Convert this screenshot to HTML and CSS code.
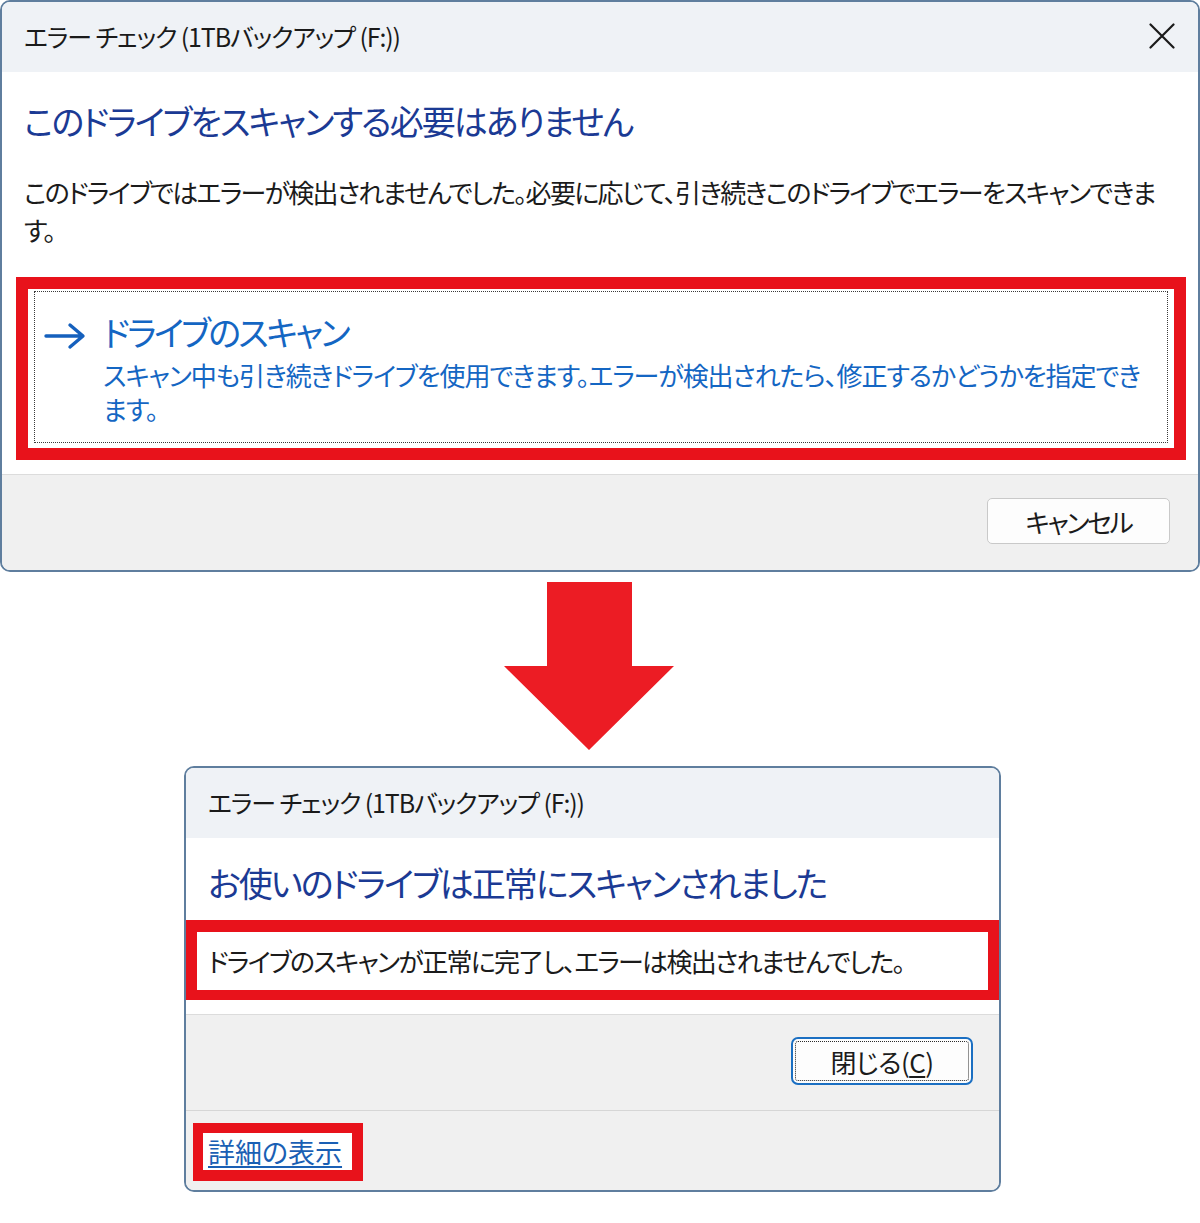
FILE: index.html
```html
<!DOCTYPE html>
<html lang="ja">
<head>
<meta charset="utf-8">
<title>エラー チェック</title>
<link rel="stylesheet" href="styles.css">
</head>
<body>
<div class="page">
  <section class="dlg dlg-top">
    <header class="titlebar">
      <span class="title">エラー チェック (1TBバックアップ (F:))</span>
      <svg class="close" viewBox="0 0 26 26" aria-hidden="true"><path d="M1.5 1.5 L24.5 24.5 M24.5 1.5 L1.5 24.5" fill="none" stroke="#1a1a1a" stroke-width="2.2" stroke-linecap="round"/></svg>
    </header>
    <div class="content content-top">
      <h1 class="instr">このドライブをスキャンする必要はありません</h1>
      <p class="msg">このドライブではエラーが検出されませんでした。必要に応じて、引き続きこのドライブでエラーをスキャンできま<br>す。</p>
      <div class="mark mark-cmd">
        <div class="cmd">
          <svg class="cmd-arrow" viewBox="0 0 42 28" aria-hidden="true"><path d="M2 14 H38 M26 3 L39 14 L26 25" fill="none" stroke="#1560bd" stroke-width="3.4" stroke-linecap="round" stroke-linejoin="round"/></svg>
          <div class="cmd-text">
            <div class="cmd-title">ドライブのスキャン</div>
            <div class="cmd-desc">スキャン中も引き続きドライブを使用できます。エラーが検出されたら、修正するかどうかを指定でき<br>ます。</div>
          </div>
        </div>
      </div>
    </div>
    <footer class="footer footer-top">
      <button class="btn" type="button">キャンセル</button>
    </footer>
  </section>

  <div class="arrow-wrap">
    <svg class="down-arrow" viewBox="0 0 170 168" aria-hidden="true"><polygon points="43,0 128,0 128,84 170,84 85,168 0,84 43,84" fill="#ec1c24"/></svg>
  </div>

  <section class="dlg dlg-bottom">
    <header class="titlebar">
      <span class="title">エラー チェック (1TBバックアップ (F:))</span>
    </header>
    <div class="content content-bottom">
      <h1 class="instr">お使いのドライブは正常にスキャンされました</h1>
      <div class="mark mark-msg">
        <p class="msg-line">ドライブのスキャンが正常に完了し、エラーは検出されませんでした。</p>
      </div>
    </div>
    <footer class="footer footer-bottom">
      <button class="btn btn-default" type="button">閉じる(<u>C</u>)</button>
    </footer>
    <div class="details">
      <div class="mark mark-link"><a class="link" href="#">詳細の表示</a></div>
    </div>
  </section>
</div>
</body>
</html>
```

FILE: styles.css
```css
* {
  box-sizing: border-box;
  margin: 0;
  padding: 0;
}

html, body {
  background: #ffffff;
}

body {
  width: 1200px;
  height: 1223px;
  overflow: hidden;
  font-family: "Noto Sans CJK JP", "Noto Sans", sans-serif;
  font-feature-settings: "palt" 1;
  color: #1b1b1b;
}

.page {
  display: flex;
  flex-direction: column;
}

/* ---------- dialog frame ---------- */
.dlg {
  display: flex;
  flex-direction: column;
  background: #ffffff;
  border: 2px solid #5f7e9e;
  border-radius: 10px;
  overflow: hidden;
}

.dlg-top {
  width: 1200px;
  height: 572px;
}

.dlg-bottom {
  width: 817px;
  height: 426px;
  margin-left: 184px;
}

.titlebar {
  flex: 0 0 70px;
  display: flex;
  align-items: center;
  justify-content: space-between;
  padding: 0 23px 2px 22px;
  background: #eff2f6;
}

.title {
  font-size: 25px;
  line-height: 32px;
  letter-spacing: -0.045em;
  color: #1a1a1a;
  white-space: nowrap;
}

.close {
  width: 26px;
  height: 26px;
  flex: 0 0 26px;
}

/* ---------- content ---------- */
.content {
  flex: 1;
  background: #ffffff;
  display: flex;
  flex-direction: column;
}

.content-top {
  padding: 27px 12px 0 22px;
}

.content-bottom {
  padding: 23px 22px 0 22px;
}

.instr {
  font-size: 34px;
  line-height: 44px;
  font-weight: normal;
  letter-spacing: -0.058em;
  color: #1b3a94;
  white-space: nowrap;
}

.msg {
  margin-top: 30px;
  font-size: 26px;
  line-height: 38px;
  letter-spacing: -0.066em;
  white-space: nowrap;
}

/* red annotation boxes */
.mark {
  border-style: solid;
  border-color: #e8121b;
  background: #ffffff;
}

.mark-cmd {
  margin: 28px 0 0 -8px;
  border-width: 12px;
  padding: 2px 6px 5px 6px;
}

.cmd {
  display: flex;
  align-items: flex-start;
  gap: 17px;
  border: 1px dotted #3a3a3a;
  padding: 20px 10px 14px 9px;
  height: 152px;
}

.cmd-arrow {
  width: 42px;
  height: 28px;
  flex: 0 0 42px;
  margin-top: 10px;
}

.cmd-text {
  color: #1466c3;
  white-space: nowrap;
}

.cmd-title {
  font-size: 34px;
  line-height: 40px;
  letter-spacing: -0.08em;
}

.cmd-desc {
  margin-top: 6px;
  font-size: 26px;
  line-height: 34px;
  letter-spacing: -0.042em;
}

.mark-msg {
  margin: 15px -22px 0 -22px;
  height: 80px;
  border-width: 12px 11px 10px 11px;
  padding-left: 11px;
  display: flex;
  align-items: center;
}

.msg-line {
  font-size: 26px;
  line-height: 36px;
  letter-spacing: -0.066em;
  white-space: nowrap;
}

/* ---------- footers ---------- */
.footer {
  display: flex;
  justify-content: flex-end;
  align-items: flex-start;
  background: #f0f0f0;
  border-top: 1px solid #dcdcdc;
}

.footer-top {
  flex: 0 0 96px;
  padding: 23px 28px 0 0;
}

.footer-bottom {
  flex: 0 0 96px;
  padding: 22px 26px 0 0;
}

.btn {
  font: inherit;
  font-feature-settings: "palt" 1;
  font-size: 26px;
  color: #1b1b1b;
  background: #fdfdfd;
  border: 1px solid #c9c9c9;
  border-radius: 5px;
  width: 183px;
  height: 46px;
  display: flex;
  align-items: center;
  justify-content: center;
  letter-spacing: -0.09em;
}

.btn-default {
  width: 182px;
  height: 48px;
  border: 2px solid #1b6fc2;
  border-radius: 7px;
  outline: 1.5px dotted #2a2a2a;
  outline-offset: -5px;
  letter-spacing: -0.02em;
}

.btn u {
  text-underline-offset: 3px;
}

.details {
  flex: 0 0 80px;
  background: #f0f0f0;
  border-top: 1px solid #d6d6d6;
  padding: 12px 0 0 7px;
  display: flex;
  align-items: flex-start;
}

.mark-link {
  border-width: 10px 11px 11px 10px;
  width: 170px;
  height: 58px;
  padding-left: 5px;
  display: flex;
  align-items: center;
}

.link {
  font-size: 27px;
  line-height: 34px;
  color: #1a5fb4;
  text-decoration: underline;
  text-underline-offset: 3px;
  white-space: nowrap;
}

/* ---------- arrow between dialogs ---------- */
.arrow-wrap {
  display: flex;
  justify-content: center;
  height: 194px;
  padding: 10px 22px 0 0;
}

.down-arrow {
  width: 170px;
  height: 168px;
}
```
